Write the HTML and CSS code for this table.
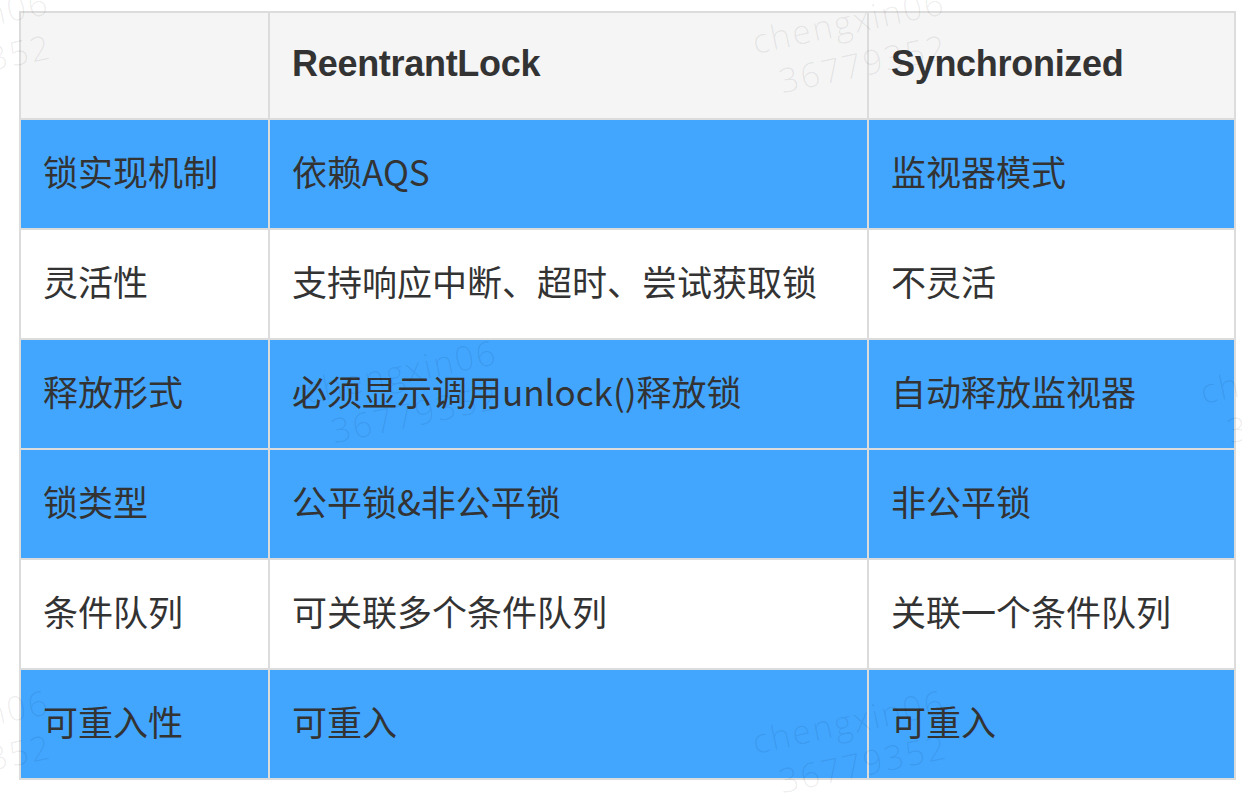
FILE: index.html
```html
<!DOCTYPE html>
<html lang="zh">
<head>
<meta charset="utf-8">
<title>ReentrantLock vs Synchronized</title>
<link rel="stylesheet" href="styles.css">
</head>
<body>
<div class="page">
  <table class="cmp">
    <colgroup>
      <col class="c1"><col class="c2"><col class="c3">
    </colgroup>
    <thead>
      <tr class="head">
        <th></th>
        <th>ReentrantLock</th>
        <th>Synchronized</th>
      </tr>
    </thead>
    <tbody>
      <tr class="blue"><td>锁实现机制</td><td>依赖AQS</td><td>监视器模式</td></tr>
      <tr class="white"><td>灵活性</td><td>支持响应中断、超时、尝试获取锁</td><td>不灵活</td></tr>
      <tr class="blue"><td>释放形式</td><td>必须显示调用unlock()释放锁</td><td>自动释放监视器</td></tr>
      <tr class="blue"><td>锁类型</td><td>公平锁&amp;非公平锁</td><td>非公平锁</td></tr>
      <tr class="white"><td>条件队列</td><td>可关联多个条件队列</td><td>关联一个条件队列</td></tr>
      <tr class="blue"><td>可重入性</td><td>可重入</td><td>可重入</td></tr>
    </tbody>
  </table>

  <div class="wm wm1">chengxin06<br><span>36779352</span></div>
  <div class="wm wm2">chengxin06<br><span>36779352</span></div>
  <div class="wm wm3">chengxin06<br><span>36779352</span></div>
  <div class="wm wm4">chengxin06<br><span>36779352</span></div>
  <div class="wm wm5">chengxin06<br><span>36779352</span></div>
  <div class="wm wm6">chengxin06<br><span>36779352</span></div>
</div>
</body>
</html>
```
FILE: styles.css
```css
html, body {
  margin: 0;
  padding: 0;
  background: #ffffff;
}

.page {
  position: relative;
  width: 1242px;
  height: 800px;
  overflow: hidden;
  padding: 11px 0 0 19px;
  box-sizing: border-box;
}

.cmp {
  border-collapse: collapse;
  table-layout: fixed;
  width: 1215px;
  border: 2px solid #dcdcdc;
  font-family: "Noto Sans CJK SC", "Noto Sans", sans-serif;
  color: #333333;
}

.c1 { width: 249px; }
.c2 { width: 599px; }
.c3 { width: 367px; }

.cmp th,
.cmp td {
  border: 2px solid #dcdcdc;
  padding: 0 0 8px 22px;
  text-align: left;
  vertical-align: middle;
  height: 100px;
  white-space: nowrap;
}

.head th {
  background: #f5f5f5;
  font-family: "Liberation Sans", Arial, sans-serif;
  font-weight: bold;
  font-size: 36px;
  color: #333333;
  height: 101px;
  padding-bottom: 4px;
  letter-spacing: -0.3px;
}

.cmp td {
  font-size: 35px;
  font-weight: 400;
}

.blue td {
  background: #42a6ff;
}

.white td {
  background: #ffffff;
}

.wm {
  position: absolute;
  font-family: "Open Sans", "Liberation Sans", sans-serif;
  font-weight: 300;
  font-size: 34px;
  line-height: 44px;
  color: rgba(0, 0, 0, 0.07);
  letter-spacing: 2px;
  transform: rotate(-12deg);
  transform-origin: 0 0;
  pointer-events: none;
  white-space: nowrap;
}

.wm span {
  padding-left: 18px;
}

.wm1 { left: 748px; top: 20px; }
.wm2 { left: 300px; top: 370px; }
.wm3 { left: 1196px; top: 370px; }
.wm4 { left: -148px; top: 20px; }
.wm5 { left: 748px; top: 720px; }
.wm6 { left: -148px; top: 720px; }
```
